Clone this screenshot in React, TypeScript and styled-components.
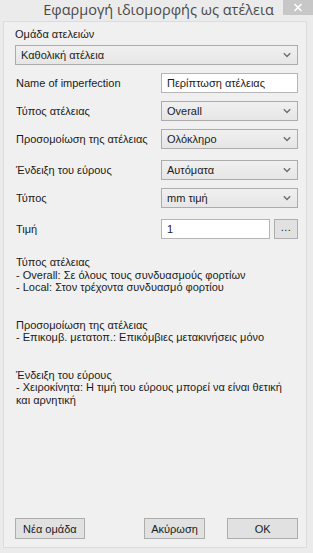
import React from "react";
import styled, { createGlobalStyle } from "styled-components";

const GlobalStyle = createGlobalStyle`
  html, body {
    margin: 0;
    padding: 0;
    background: #f3f3f3;
  }
  body {
    font-family: "Liberation Sans", Arial, sans-serif;
    font-size: 11px;
    color: #1b1b1b;
  }
`;

const Window = styled.div`
  position: relative;
  width: 313px;
  height: 553px;
  background: #ebebeb;
  display: flex;
  flex-direction: column;
  box-sizing: border-box;
`;

const TitleBar = styled.div`
  height: 21px;
  display: flex;
  align-items: center;
  justify-content: center;
  flex-shrink: 0;
`;

const Title = styled.div`
  font-family: "Open Sans", "Noto Sans", sans-serif;
  font-size: 14.5px;
  color: #4a4a4a;
  margin-top: -3px;
  margin-left: 4px;
  white-space: nowrap;
`;

const CloseButton = styled.div`
  position: absolute;
  top: 0;
  right: 0;
  width: 30px;
  height: 15px;
  background: #c7c7c7;
  display: flex;
  align-items: center;
  justify-content: center;
`;

const Client = styled.div`
  margin: 0 6px 5px 3px;
  flex: 1;
  background: #f0f0f0;
  border: 1px solid #dcdcdc;
  display: flex;
  flex-direction: column;
  padding: 2px 8px 0 11px;
`;

const Label = styled.div<{ $top?: number }>`
  margin-top: ${(p) => p.$top ?? 0}px;
  line-height: 13px;
  white-space: nowrap;
`;

const Row = styled.div<{ $top: number }>`
  display: flex;
  align-items: center;
  margin-top: ${(p) => p.$top}px;
`;

const RowLabel = styled.div`
  width: 147px;
  padding-left: 1px;
  white-space: nowrap;
`;

const Control = styled.div<{ $wide?: boolean }>`
  display: flex;
  align-items: center;
  gap: 4px;
  flex: ${(p) => (p.$wide ? 1 : "none")};
  width: ${(p) => (p.$wide ? "auto" : "137px")};
`;

const SelectBox = styled.div`
  flex: 1;
  height: 20px;
  box-sizing: border-box;
  border: 1px solid #acacac;
  background: linear-gradient(#f0f0f0, #e6e6e6);
  display: flex;
  align-items: center;
  justify-content: space-between;
  padding: 0 6px 0 5px;
`;

const TextBox = styled.div`
  flex: 1;
  height: 20px;
  box-sizing: border-box;
  border: 1px solid #b5b5b5;
  background: #ffffff;
  display: flex;
  align-items: center;
  padding: 0 5px;
`;

const DotsButton = styled.div`
  width: 24px;
  height: 20px;
  box-sizing: border-box;
  border: 1px solid #adadad;
  background: #e1e1e1;
  display: flex;
  align-items: center;
  justify-content: center;
  padding-bottom: 4px;
  letter-spacing: 0.5px;
`;

const Notes = styled.div`
  margin-top: 17px;
  line-height: 12.5px;
  padding-left: 1px;
`;

const NoteGap = styled.div`
  height: 25px;
`;

const Footer = styled.div`
  margin-top: auto;
  margin-bottom: 8px;
  display: flex;
  align-items: center;
`;

const Button = styled.div<{ $width: number; $gap?: number }>`
  width: ${(p) => p.$width}px;
  margin-left: ${(p) => p.$gap ?? 0}px;
  height: 21px;
  box-sizing: border-box;
  border: 1px solid #adadad;
  background: #e1e1e1;
  display: flex;
  align-items: center;
  justify-content: center;
`;

function Chevron() {
  return (
    <svg width="8" height="6" viewBox="0 0 8 6">
      <path d="M0.8 1.2 L4 4.4 L7.2 1.2" fill="none" stroke="#6d6d6d" strokeWidth="1.4" />
    </svg>
  );
}

function Select({ value }: { value: string }) {
  return (
    <SelectBox>
      <span>{value}</span>
      <Chevron />
    </SelectBox>
  );
}

const rows = [
  { label: "Τύπος ατέλειας", value: "Overall", top: 8 },
  { label: "Προσομοίωση της ατέλειας", value: "Ολόκληρο", top: 8 },
  { label: "Ένδειξη του εύρους", value: "Αυτόματα", top: 11 },
  { label: "Τύπος", value: "mm τιμή", top: 8 },
];

export default function App() {
  return (
    <>
      <GlobalStyle />
      <Window>
        <TitleBar>
          <Title>Εφαρμογή ιδιομορφής ως ατέλεια</Title>
        </TitleBar>
        <CloseButton>
          <svg width="10" height="9" viewBox="0 0 10 9">
            <path d="M1.5 1 L8.5 8 M8.5 1 L1.5 8" stroke="#ffffff" strokeWidth="1.6" />
          </svg>
        </CloseButton>
        <Client>
          <Label $top={4}>Ομάδα ατελειών</Label>
          <Row $top={4}>
            <Control $wide>
              <Select value="Καθολική ατέλεια" />
            </Control>
          </Row>
          <Row $top={8}>
            <RowLabel>Name of imperfection</RowLabel>
            <Control>
              <TextBox>Περίπτωση ατέλειας</TextBox>
            </Control>
          </Row>
          {rows.map((r) => (
            <Row key={r.label} $top={r.top}>
              <RowLabel>{r.label}</RowLabel>
              <Control>
                <Select value={r.value} />
              </Control>
            </Row>
          ))}
          <Row $top={11}>
            <RowLabel>Τιμή</RowLabel>
            <Control>
              <TextBox>1</TextBox>
              <DotsButton>...</DotsButton>
            </Control>
          </Row>
          <Notes>
            <div>Τύπος ατέλειας</div>
            <div>- Overall: Σε όλους τους συνδυασμούς φορτίων</div>
            <div>- Local: Στον τρέχοντα συνδυασμό φορτίου</div>
            <NoteGap />
            <div>Προσομοίωση της ατέλειας</div>
            <div>- Επικομβ. μετατοπ.: Επικόμβιες μετακινήσεις μόνο</div>
            <NoteGap />
            <div>Ένδειξη του εύρους</div>
            <div>- Χειροκίνητα: Η τιμή του εύρους μπορεί να είναι θετική</div>
            <div>και αρνητική</div>
          </Notes>
          <Footer>
            <Button $width={70}>Νέα ομάδα</Button>
            <Button $width={62} $gap={59}>Ακύρωση</Button>
            <Button $width={71} $gap={22}>OK</Button>
          </Footer>
        </Client>
      </Window>
    </>
  );
}
